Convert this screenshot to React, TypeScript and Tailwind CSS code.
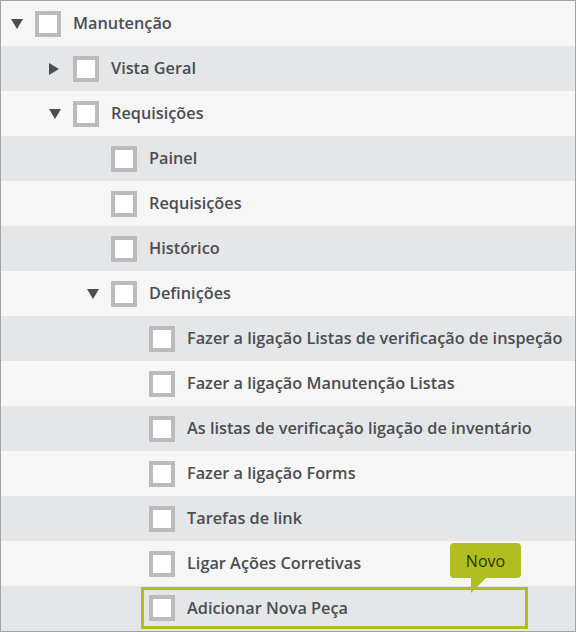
import { ReactNode } from 'react'

// ─── Types ────────────────────────────────────────────────────────────────────

type Toggle = 'open' | 'closed' | 'none'

interface Node {
  label: string
  level: number
  toggle: Toggle
}

const rows: Node[] = [
  { label: 'Manutenção', level: 0, toggle: 'open' },
  { label: 'Vista Geral', level: 1, toggle: 'closed' },
  { label: 'Requisições', level: 1, toggle: 'open' },
  { label: 'Painel', level: 2, toggle: 'none' },
  { label: 'Requisições', level: 2, toggle: 'none' },
  { label: 'Histórico', level: 2, toggle: 'none' },
  { label: 'Definições', level: 2, toggle: 'open' },
  { label: 'Fazer a ligação Listas de verificação de inspeção', level: 3, toggle: 'none' },
  { label: 'Fazer a ligação Manutenção Listas', level: 3, toggle: 'none' },
  { label: 'As listas de verificação ligação de inventário', level: 3, toggle: 'none' },
  { label: 'Fazer a ligação Forms', level: 3, toggle: 'none' },
  { label: 'Tarefas de link', level: 3, toggle: 'none' },
  { label: 'Ligar Ações Corretivas', level: 3, toggle: 'none' },
]

const indent = ['pl-[10px]', 'pl-[48px]', 'pl-[86px]', 'pl-[124px]']

// ─── Pieces ───────────────────────────────────────────────────────────────────

function Arrow({ toggle }: { toggle: Toggle }) {
  return (
    <div className="flex h-[24px] w-[24px] flex-none items-center">
      {toggle === 'open' && (
        <svg width="12" height="10" viewBox="0 0 12 10">
          <path d="M0 0 H12 L6 10 Z" fill="#4a4e52" />
        </svg>
      )}
      {toggle === 'closed' && (
        <svg width="10" height="12" viewBox="0 0 10 12">
          <path d="M0 0 L10 6 L0 12 Z" fill="#4a4e52" />
        </svg>
      )}
    </div>
  )
}

function Box() {
  return <div className="h-[26px] w-[26px] flex-none border-4 border-[#bbbbbd] bg-white" />
}

function Label({ children }: { children: ReactNode }) {
  return (
    <span className="ml-[12px] whitespace-nowrap text-[16.3px] font-semibold text-[#4a4e52]">
      {children}
    </span>
  )
}

// ─── App ──────────────────────────────────────────────────────────────────────

export default function App() {
  return (
    <div
      className="h-[632px] w-[576px] overflow-hidden border border-[#a3a3a3] bg-[#f6f6f6]"
      style={{ fontFamily: '"Open Sans", "Liberation Sans", sans-serif' }}
    >
      {rows.map((r, i) => (
        <div
          key={i}
          className={`flex h-[45px] items-center ${indent[r.level]} ${
            i % 2 === 1 ? 'bg-[#e5e6e7]' : 'bg-[#f6f6f6]'
          }`}
        >
          <Arrow toggle={r.toggle} />
          <Box />
          <Label>{r.label}</Label>
        </div>
      ))}

      {/* ── Highlighted new item ─────────────────────────────────────────── */}
      <div className="relative h-[45px] bg-[#e5e6e7] pt-px">
        <div className="ml-[140px] flex h-[42px] w-[387px] items-center border-[3px] border-[#b1be21] pl-[5px]">
          <Box />
          <Label>Adicionar Nova Peça</Label>
        </div>

        <div className="absolute left-[449px] top-[-43px] flex h-[35px] w-[71px] items-center justify-center rounded-[4px] bg-[#b1be21] text-[16px] text-[#2e3100]">
          Novo
        </div>
        <div className="absolute left-[470px] top-[-8px] h-0 w-0 border-r-[15px] border-t-[15px] border-r-transparent border-t-[#b1be21]" />
      </div>
    </div>
  )
}
